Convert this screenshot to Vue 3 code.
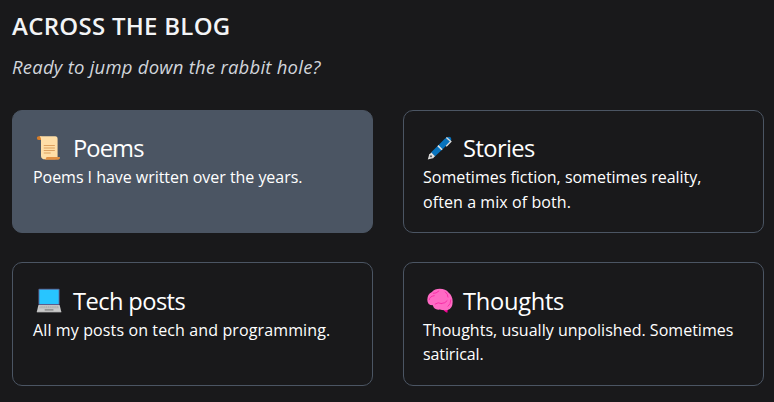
<script setup>
const cards = [
  {
    id: 'poems',
    title: 'Poems',
    tracking: '-0.9px',
    lines: [{ text: 'Poems I have written over the years.', tracking: '-0.04px' }],
    active: true,
  },
  {
    id: 'stories',
    title: 'Stories',
    tracking: '-0.6px',
    lines: [
      { text: 'Sometimes fiction, sometimes reality,', tracking: '-0.01px' },
      { text: 'often a mix of both.', tracking: '0.08px' },
    ],
  },
  {
    id: 'tech',
    title: 'Tech posts',
    tracking: '-0.6px',
    lines: [{ text: 'All my posts on tech and programming.', tracking: '0.12px' }],
  },
  {
    id: 'thoughts',
    title: 'Thoughts',
    tracking: '-0.3px',
    lines: [
      { text: 'Thoughts, usually unpolished. Sometimes', tracking: '0.02px' },
      { text: 'satirical.', tracking: '-0.1px' },
    ],
  },
]
</script>

<template>
  <main class="page">
    <h2 class="heading">ACROSS THE BLOG</h2>
    <p class="tagline">Ready to jump down the rabbit hole?</p>
    <section class="grid">
      <a v-for="card in cards" :key="card.id" class="card" :class="[card.id, { active: card.active }]">
        <h3 class="title">
          <svg v-if="card.id === 'poems'" class="icon" viewBox="0 0 32 32">
            <path d="M7 3.500 H4 Q2 3.500 2 5.500 Q2 7.500 4 7.500 H8Z" fill="#d67d29" />
            <path d="M5 3.500 H22 Q24.500 3.500 24.500 6.500 V26 L22 28.500 H9 Q6.500 28 6.500 25 V7 Q6.500 5 5 3.500Z" fill="#ffdea7" />
            <path d="M10 28.900 Q12.300 28.500 12.500 26 H27 Q27.500 28.900 24.500 28.900Z" fill="#e39143" />
            <path d="M9.500 13.500 H21.500 M9.500 16.300 H21.500 M9.500 19 H21.500 M9.500 21.700 H17" stroke="#dda160" stroke-width="1.200" />
          </svg>
          <svg v-else-if="card.id === 'stories'" class="icon" viewBox="0 0 32 32">
            <path d="M3 28.800 L4.800 22.500 L9.500 27Z" fill="#d8d8d8" />
            <path d="M4.600 23.500 L7 20.800 L11.200 25 L8.500 27.400Z" fill="#dedede" />
            <path d="M6.800 21 L21.500 6.200 Q25.500 2.800 27.700 4.500 Q29.600 7 27 10 L11 25.200Z" fill="#0873bd" />
            <path d="M14 13.700 L18.500 18.200" stroke="#e5e5e5" stroke-width="1.700" />
            <path d="M23.200 4.900 L28 9.300 L23 14.300" fill="none" stroke="#dadada" stroke-width="1.500" />
            <circle cx="6.500" cy="25.300" r="1.100" fill="#555" />
          </svg>
          <svg v-else-if="card.id === 'tech'" class="icon" viewBox="0 0 32 32">
            <rect x="3.700" y="3" width="23" height="17.500" rx="1" fill="#5b5e8e" />
            <rect x="4.700" y="4" width="21" height="15.500" fill="#28c5ff" />
            <path d="M3.700 20.500 H26.700 L28.500 28 H2Z" fill="#c9c9c9" />
            <path d="M5.200 21.500 H25.200 L25.900 24 H4.500Z" fill="#b0b0b0" />
            <path d="M5 22.700 H25.500" stroke="#ddd" stroke-width=".6" stroke-dasharray="1.200 .8" />
            <rect x="10.500" y="25" width="9.500" height="1.800" fill="#929292" />
            <path d="M2 28 H28.500" stroke="#d5d5d5" stroke-width="1" />
          </svg>
          <svg v-else class="icon" viewBox="0 0 32 32">
            <path d="M17 23 L24.800 24.500 L24.300 29 Q21 28.500 20 25Z" fill="#f00092" />
            <path d="M2.500 15 Q2.500 9 7.500 6.500 Q10.500 3 16 3 Q22.500 3 25.500 7 Q30 10.500 30 17 Q30 24.500 24.500 26 Q20 27 16 25.500 Q10 26.500 8.500 21 Q2.500 21 2.500 15Z" fill="#ff6ac4" />
            <path d="M4.500 15 Q5 11 10 10.500 M9 8 Q12 8.500 15 5.500 M22 6.500 Q25 8.500 25 12 M11 19.500 Q14 17 18 19 M18 19 Q22 19 24 16 M28 15 Q28 20 25 22" fill="none" stroke="#f72aa5" stroke-width="1" stroke-linecap="round" />
          </svg>
          <span class="label" :style="{ letterSpacing: card.tracking }">{{ card.title }}</span>
        </h3>
        <p class="desc">
          <span v-for="line in card.lines" :key="line.text" class="line" :style="{ letterSpacing: line.tracking }">{{ line.text }}</span>
        </p>
      </a>
    </section>
  </main>
</template>

<style>
body { margin: 0; background: #19191b; }
</style>

<style scoped>
.page {
  box-sizing: border-box;
  height: 402px;
  padding: 10px 10px 0 12px;
  overflow: hidden;
  color: #fff;
  background: #19191b;
  font-family: "Open Sans", "Noto Sans", sans-serif;
}
.heading { margin: 0; font-size: 24px; line-height: 32px; font-weight: 600; letter-spacing: 0.28px; color: #f3f4f6; white-space: nowrap; }
.tagline { margin: 11px 0 0; font-size: 18.500px; line-height: 28px; font-style: italic; letter-spacing: 0.23px; color: #d1d5db; }
.grid { display: grid; grid-template-columns: 361px 361px; grid-template-rows: 123px 124px; gap: 29px 30px; margin-top: 29px; }
.card { box-sizing: border-box; padding: 21px 19px 0 20px; border: 1px solid #4b5563; border-radius: 10px; }
.card.active { background: #4b5563; }
.title { display: flex; align-items: flex-start; margin: 0; height: 33px; font-size: 23.700px; line-height: 33px; font-weight: 400; }
.icon { flex: none; width: 29.500px; height: 29.500px; margin: 1px 8.500px 0 2px; }
.desc { margin: 0; font-size: 16px; line-height: 24.500px; }
.line { display: block; white-space: nowrap; }
.stories, .thoughts { padding-left: 19px; }
.tech, .thoughts { padding-top: 22px; }
.tech .desc, .thoughts .desc { line-height: 24px; }
</style>
